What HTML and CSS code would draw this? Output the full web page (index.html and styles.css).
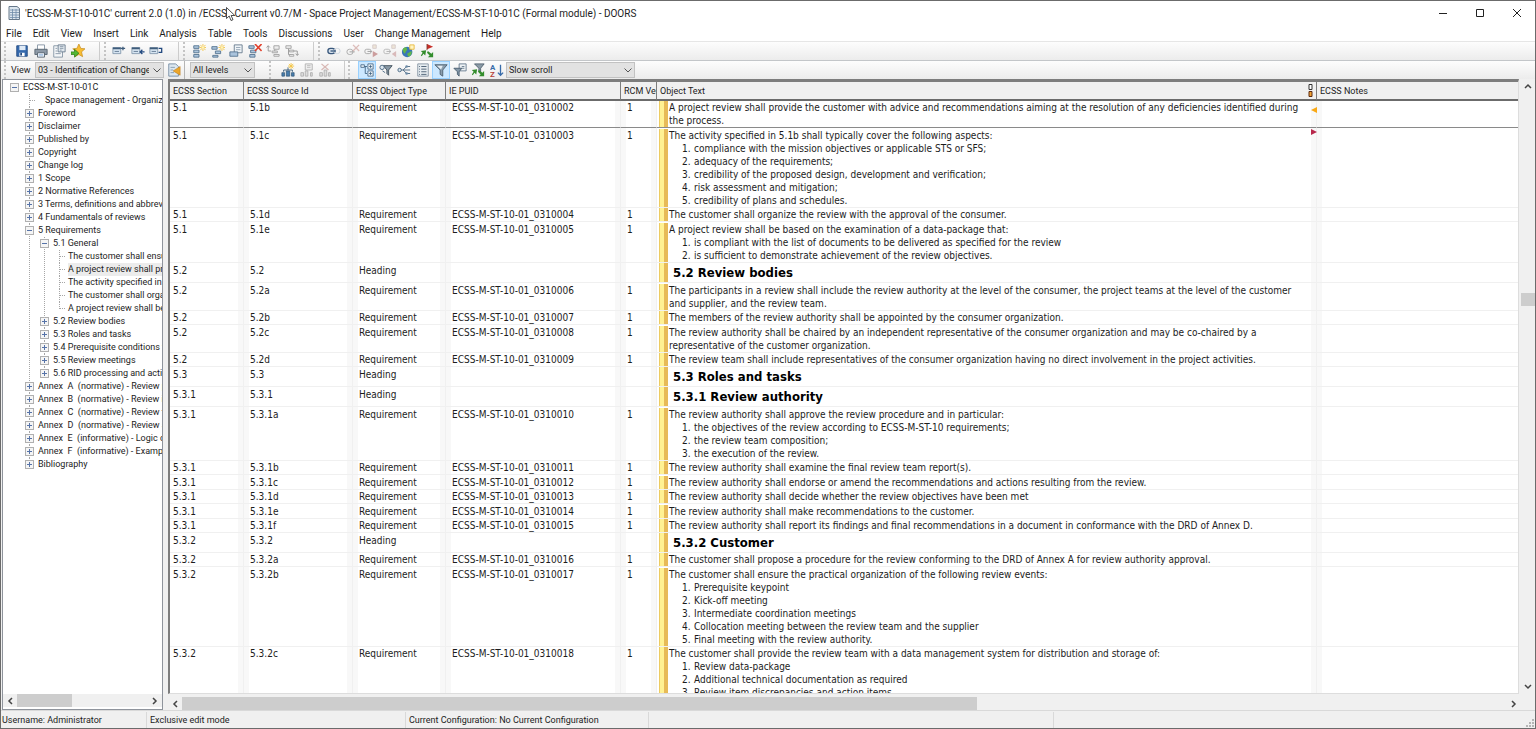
FILE: index.html
```
<!DOCTYPE html>
<html lang="en">
<head>
    <meta charset="UTF-8">
    <meta name="viewport" content="width=device-width, initial-scale=1.0">
    <title>ECSS-M-ST-10-01C (Formal module) - DOORS</title>
    <link rel="stylesheet" href="styles.css">
</head>
<body>
    <div class="window">
        <header class="titlebar">
            <svg class="app-icon" viewBox="0 0 12 14"><path d="M1 .5h8l2.500 2V13.500H1z" fill="#dce6ee" stroke="#66788a"/><path d="M2 4h9M2 6.500h9M2 9h9M2 11.500h9M4.500 3v10M8 3v10" stroke="#6f8ca8" stroke-width=".8"/></svg>
            <h1 class="title">'ECSS-M-ST-10-01C' current 2.0 (1.0) in /ECSS - Current v0.7/M - Space Project Management/ECSS-M-ST-10-01C (Formal module) - DOORS</h1>
            <div class="window-buttons">
                <button type="button" aria-label="Minimize"><svg viewBox="0 0 10 10"><path d="M1 5.500h8"/></svg></button>
                <button type="button" aria-label="Maximize"><svg viewBox="0 0 10 10"><path d="M1.500 1.500h7v7h-7z"/></svg></button>
                <button type="button" aria-label="Close"><svg viewBox="0 0 10 10"><path d="M1 1l8 8M9 1L1 9"/></svg></button>
            </div>
            <svg class="cursor" viewBox="0 0 10 15"><path d="M.5.500v11l2.700-2.500 1.800 4.500 2-.8-1.900-4.200h3.700z" fill="#fff" stroke="#222" stroke-width=".8"/></svg>
        </header>

        <nav class="menubar">
            <button type="button">File</button>
            <button type="button">Edit</button>
            <button type="button">View</button>
            <button type="button">Insert</button>
            <button type="button">Link</button>
            <button type="button">Analysis</button>
            <button type="button">Table</button>
            <button type="button">Tools</button>
            <button type="button">Discussions</button>
            <button type="button">User</button>
            <button type="button">Change Management</button>
            <button type="button">Help</button>
        </nav>

        <div class="toolbar">
            <div class="group group-file">
                <button type="button" aria-label="Save"><svg viewBox="0 0 16 16"><path d="M2 2h12v12H2z" fill="#3569ad" stroke="#234a80"/><path d="M5 2h7v5H5z" fill="#dfeaf6"/><path d="M5 10h6v4H5z" fill="#fff"/><path d="M6 10h2v3H6z" fill="#234a80"/></svg></button>
                <button type="button" aria-label="Print"><svg viewBox="0 0 16 16"><path d="M4 1h8v6H4z" fill="#fff" stroke="#8090a0"/><path d="M1 6h14v6H1z" fill="#8d99a6" stroke="#55616e"/><path d="M4 10h8v5H4z" fill="#eef4fb" stroke="#55616e"/><path d="M5.500 12.500h5" stroke="#6d9bd0"/></svg></button>
                <button type="button" aria-label="Properties"><svg viewBox="0 0 16 16"><path d="M2 2h10v13H2z" fill="#f4f6f8" stroke="#8292a2"/><path d="M7 1h8v8H7z" fill="#e1e8ee" stroke="#687a8d"/><path d="M9 3h4M9 5h4M9 7h2M4 5h2M4 8h2M4 11h6" stroke="#8595a5"/></svg></button>
                <button type="button" aria-label="Add favorite"><svg viewBox="0 0 16 16"><path d="M9 0l2.200 5 4.800.5-4 3.500 1.300 5.500L9 12l-4.500 2.500L5.700 9 2 5.500 6.800 5z" fill="#f8bd32" stroke="#c58b1c" stroke-width=".8"/><path d="M0 9h4V6l5 4.500L4 15v-3H0z" fill="#54b834" stroke="#287817" stroke-width=".8"/></svg></button>
            </div>
            <div class="group group-object">
                <button type="button" aria-label="Insert before"><svg viewBox="0 0 16 16"><path d="M1 4h9v7H1z" fill="#d6e4f1" stroke="#8297ab"/><path d="M1 5h9" stroke="#3e5c7b" stroke-width="2"/><path d="M3 8.500h5" stroke="#5f7890"/><path d="M10 5h5M12.500 3v4" stroke="#3e5c7b" stroke-width="1.500"/></svg></button>
                <button type="button" aria-label="Insert after"><svg viewBox="0 0 16 16"><path d="M1 4h9v7H1z" fill="#d6e4f1" stroke="#8297ab"/><path d="M1 5h9" stroke="#3e5c7b" stroke-width="2"/><path d="M3 8.500h5" stroke="#5f7890"/><path d="M10 9h5.500M13 6.500L10.500 9l2.500 2.500" fill="none" stroke="#234a80" stroke-width="1.500"/></svg></button>
                <button type="button" aria-label="Insert below"><svg viewBox="0 0 16 16"><path d="M1 4h9v7H1z" fill="#d6e4f1" stroke="#8297ab"/><path d="M1 5h9" stroke="#3e5c7b" stroke-width="2"/><path d="M3 8.500h5" stroke="#5f7890"/><path d="M11 5h3.500v4.500H11" fill="none" stroke="#234a80" stroke-width="1.500"/></svg></button>
            </div>
            <div class="group group-edit">
                <button type="button" aria-label="New object"><svg viewBox="0 0 16 16"><path d="M2 2h6v3H2zM2 7h6v3H2zM2 12h6v3H2z" fill="#acc5dd" stroke="#54728f"/><path d="M12.500 0v8M8.500 4h8M9.500 1l6 6M15.500 1l-6 6" stroke="#f4c544"/><circle cx="12.500" cy="4" r="1.500" fill="#fff3b8"/></svg></button>
                <button type="button" aria-label="New object below"><svg viewBox="0 0 16 16"><path d="M1 3h6v3H1zM5 8h6v3H5zM2 13h6v2H2z" fill="#acc5dd" stroke="#54728f"/><path d="M12.500 0v8M8.500 4h8M9.500 1l6 6M15.500 1l-6 6" stroke="#f4c544"/><circle cx="12.500" cy="4" r="1.500" fill="#fff3b8"/></svg></button>
                <button type="button" aria-label="Edit object"><svg viewBox="0 0 16 16"><path d="M6 1h9v9H6z" fill="#eef3f7" stroke="#65788c"/><path d="M8 4h5M8 6.500h5" stroke="#8fa0b1"/><path d="M1 9h9v5H1z" fill="#aac3dc" stroke="#54728f"/></svg></button>
                <button type="button" aria-label="Delete object"><svg viewBox="0 0 16 16"><path d="M1 2h6v3H1zM3 7h6v3H3zM2 12h6v3H2z" fill="#acc5dd" stroke="#54728f"/><path d="M8 0l7.500 8M15.500 0L8 8" stroke="#e0402c" stroke-width="1.800"/></svg></button>
                <button type="button" aria-label="Promote" disabled><svg viewBox="0 0 16 16"><path d="M2.500 2v6H6M.5 4l2-2 2 2M10 6v2" fill="none" stroke="#929292"/><path d="M9 2h6v4H9zM7 8h6v2H7zM9 12h6v2H9z" fill="#eee" stroke="#a0a0a0"/></svg></button>
                <button type="button" aria-label="Demote" disabled><svg viewBox="0 0 16 16"><path d="M4 5v7h3M8 8h6v5M12 11l2 2 2-2" fill="none" stroke="#929292"/><path d="M1 2h6v3H1zM5 7h5v2H5zM5 12h5v2H5z" fill="#eee" stroke="#a0a0a0"/></svg></button>
            </div>
            <div class="group group-link">
                <button type="button" aria-label="Link"><svg viewBox="0 0 16 16"><rect x="1" y="5" width="8" height="6" rx="3" fill="#d7e1ec" stroke="#38577c" stroke-width="1.500"/><rect x="8" y="5" width="7" height="6" rx="3" fill="none" stroke="#c9d2dc"/><path d="M4 8h6" stroke="#38577c" stroke-width="1.500"/></svg></button>
                <button type="button" aria-label="Delete link" disabled><svg viewBox="0 0 16 16"><rect x="1" y="6" width="7" height="6" rx="3" fill="none" stroke="#a5a5a5"/><path d="M4 9h6" stroke="#999"/><path d="M8 1l7 7M15 1L8 8" stroke="#dcbcb9" stroke-width="1.500"/></svg></button>
                <button type="button" aria-label="Start link" disabled><svg viewBox="0 0 16 16"><rect x="1" y="6" width="7" height="5" rx="2" fill="none" stroke="#a5a5a5"/><path d="M4 8.500h5" stroke="#999"/><path d="M10 1h4v4h-4z" fill="#eee5d6" stroke="#d6caca"/><path d="M10 8l6 3.500-6 3.500z" fill="#cc9d9d"/></svg></button>
                <button type="button" aria-label="Complete link" disabled><svg viewBox="0 0 16 16"><rect x="1" y="6" width="7" height="5" rx="2" fill="none" stroke="#b5b5b5"/><path d="M4 8.500h5" stroke="#aaa"/><path d="M10 1h4v4h-4z" fill="#eee5d6" stroke="#d6caca"/><path d="M15 8l-5 3.500 5 3.500z" fill="#d9baba"/></svg></button>
                <button type="button" aria-label="External link"><svg viewBox="0 0 16 16"><circle cx="7" cy="9" r="6" fill="#3976b8"/><path d="M2 6c3-4 5-2 5 0s-2 2-2 4-3 0-3-4zM7 11l5-3c1 4-2 7-4 6z" fill="#63b848"/><path d="M10 1h5v5h-5z" fill="#fff5c4" stroke="#e9b739"/></svg></button>
                <button type="button" aria-label="Refresh links"><svg viewBox="0 0 16 16"><path d="M8 0l7 3-7 3z" fill="#c72e28"/><path d="M8 0v7" stroke="#813b31"/><path d="M1 8l6-1-1 6-2-2-2 3-1-1 2-3zM15 15H9l2-2-3-3 1-2 4 3 2-2z" fill="#338d2d"/></svg></button>
            </div>
        </div>

        <div class="toolbar toolbar-view">
            <label class="view-label" for="view">View</label>
            <span class="combo combo-view"><select id="view"><option>03 - Identification of Changes</option></select><svg viewBox="0 0 8 5"><path d="M.5.500L4 4 7.500.500"/></svg></span>
            <button type="button" class="load-view" aria-label="Load view"><svg viewBox="0 0 16 16"><path d="M2 1h8l3 3v11H2z" fill="#dce7ef" stroke="#728aa2"/><path d="M4 5h5M4 8h3M4 11h4" stroke="#8199af"/><path d="M15 4v10L7 9z" fill="#eca629" stroke="#b7761b" stroke-width=".6"/></svg></button>
            <span class="combo combo-level"><select aria-label="Levels"><option>All levels</option></select><svg viewBox="0 0 8 5"><path d="M.5.500L4 4 7.500.500"/></svg></span>
            <div class="group group-column">
                <button type="button" aria-label="Insert column"><svg viewBox="0 0 16 16"><path d="M3 10V8h10v2M8 8V5" fill="none" stroke="#315675"/><path d="M1 11h3v4H1zM6 9h4v6H6zM12 11h3v4h-3z" fill="#477cad" stroke="#315675" stroke-width=".8"/><path d="M11.500 0v7M8 3.500h7M9 1l5 5M14 1L9 6" stroke="#f4c544"/></svg></button>
                <button type="button" aria-label="Edit column" disabled><svg viewBox="0 0 16 16"><path d="M1 11h3v4H1zM6 9h3v6H6zM12 11h2v4h-2z" fill="#ddd" stroke="#b0b0b0"/><path d="M6 1h8v7H6z" fill="#eee" stroke="#b0b0b0"/><path d="M8 3h4M8 5h4" stroke="#bbb"/></svg></button>
                <button type="button" aria-label="Remove column" disabled><svg viewBox="0 0 16 16"><path d="M2 11h3v4H2zM7 8h3v7H7zM12 11h2v4h-2z" fill="#ddd" stroke="#b0b0b0"/><path d="M4 1l8 7M12 1L4 8" stroke="#d8b8b4" stroke-width="1.500"/></svg></button>
            </div>
            <div class="group group-filter">
                <button type="button" class="active" aria-label="Module explorer"><svg viewBox="0 0 16 16"><path d="M1 2h4v3H1zM9 1h6v6H9zM9 9h6v6H9z" fill="#e6eef4" stroke="#4f6e8c"/><path d="M5 4h3M6 4v8h2M10.500 4h3M12 2.500v3M10.500 12h3M12 10.500v3" fill="none" stroke="#3f6280"/></svg></button>
                <button type="button" aria-label="Filter links"><svg viewBox="0 0 16 16"><path d="M5 3h10l-4 5v6l-2-2V8z" fill="#8798a6" stroke="#40505d"/><circle cx="3.500" cy="5" r="2.500" fill="#dce7ef" stroke="#45647f"/><path d="M4 9l3 2" stroke="#45647f"/></svg></button>
                <button type="button" aria-label="Graphics"><svg viewBox="0 0 16 16"><path d="M4 8h3l4-4h4M7 8h8M7 8l4 4h4" fill="none" stroke="#45647f"/><circle cx="3" cy="8" r="2" fill="#d8e4ed" stroke="#45647f"/><circle cx="11" cy="4" r="1.500" fill="#6c8aa6"/><circle cx="11" cy="12" r="1.500" fill="#6c8aa6"/></svg></button>
                <button type="button" aria-label="Outline"><svg viewBox="0 0 16 16"><path d="M2 1h12v14H2z" fill="#e7edf1" stroke="#8291a0"/><path d="M6 4h6M6 7h6M6 10h6M6 13h6" stroke="#40556a"/><path d="M3.500 4h1M3.500 7h1M3.500 10h1M3.500 13h1" stroke="#40556a"/></svg></button>
                <button type="button" class="active" aria-label="Filter"><svg viewBox="0 0 16 16"><path d="M1 2h14L10 8v7l-3-2V8z" fill="#8a9dad" stroke="#4a5b6b"/><path d="M3.500 3H10L8 7.500z" fill="#e5edf3"/></svg></button>
                <button type="button" aria-label="Edit filter"><svg viewBox="0 0 16 16"><path d="M7 1h8v8H7z" fill="#eef2f5" stroke="#64778b"/><path d="M10 4h3M10 6h3" stroke="#64778b"/><path d="M1 6h9L7 10v5l-2-2v-3z" fill="#8598a9" stroke="#465a6d"/></svg></button>
                <button type="button" aria-label="Refresh filter"><svg viewBox="0 0 16 16"><path d="M4 1h11l-4 5v5l-2-1V6z" fill="#8b9ba7" stroke="#4f606e"/><path d="M1 8l6-1-1 6-2-2-2 3-1-1 2-3zM15 15H9l2-2-3-3 1-2 4 3 2-2z" fill="#338d2d"/></svg></button>
                <button type="button" aria-label="Sort"><svg viewBox="0 0 16 16"><text x="0" y="8" class="sort-a">A</text><text x="0" y="16" class="sort-z">Z</text><path d="M12 2v12M9 11l3 3 3-3" fill="none" stroke="#386ba9" stroke-width="1.500"/></svg></button>
            </div>
            <span class="combo combo-scroll"><select aria-label="Scroll speed"><option>Slow scroll</option></select><svg viewBox="0 0 8 5"><path d="M.5.500L4 4 7.500.500"/></svg></span>
        </div>

        <main class="workspace">
            <aside class="explorer">
                <ul class="tree">
                    <li><div class="node"><button type="button" class="toggle open" aria-label="Collapse"></button><span>ECSS-M-ST-10-01C</span></div>
                        <ul>
                            <li><div class="node leaf intro"><span>Space management - Organization</span></div></li>
                            <li><div class="node"><button type="button" class="toggle" aria-label="Expand"></button><span>Foreword</span></div></li>
                            <li><div class="node"><button type="button" class="toggle" aria-label="Expand"></button><span>Disclaimer</span></div></li>
                            <li><div class="node"><button type="button" class="toggle" aria-label="Expand"></button><span>Published by</span></div></li>
                            <li><div class="node"><button type="button" class="toggle" aria-label="Expand"></button><span>Copyright</span></div></li>
                            <li><div class="node"><button type="button" class="toggle" aria-label="Expand"></button><span>Change log</span></div></li>
                            <li><div class="node"><button type="button" class="toggle" aria-label="Expand"></button><span>1 Scope</span></div></li>
                            <li><div class="node"><button type="button" class="toggle" aria-label="Expand"></button><span>2 Normative References</span></div></li>
                            <li><div class="node"><button type="button" class="toggle" aria-label="Expand"></button><span>3 Terms, definitions and abbreviated</span></div></li>
                            <li><div class="node"><button type="button" class="toggle" aria-label="Expand"></button><span>4 Fundamentals of reviews</span></div></li>
                            <li><div class="node"><button type="button" class="toggle open" aria-label="Collapse"></button><span>5 Requirements</span></div>
                                <ul>
                                    <li><div class="node"><button type="button" class="toggle open" aria-label="Collapse"></button><span>5.1 General</span></div>
                                        <ul>
                                            <li><div class="node leaf"><span>The customer shall ensure</span></div></li>
                                            <li><div class="node leaf selected"><span>A project review shall provide</span></div></li>
                                            <li><div class="node leaf"><span>The activity specified in 5.1b</span></div></li>
                                            <li><div class="node leaf"><span>The customer shall organize</span></div></li>
                                            <li><div class="node leaf"><span>A project review shall be based</span></div></li>
                                        </ul>
                                    </li>
                                    <li><div class="node"><button type="button" class="toggle" aria-label="Expand"></button><span>5.2 Review bodies</span></div></li>
                                    <li><div class="node"><button type="button" class="toggle" aria-label="Expand"></button><span>5.3 Roles and tasks</span></div></li>
                                    <li><div class="node"><button type="button" class="toggle" aria-label="Expand"></button><span>5.4 Prerequisite conditions for</span></div></li>
                                    <li><div class="node"><button type="button" class="toggle" aria-label="Expand"></button><span>5.5 Review meetings</span></div></li>
                                    <li><div class="node"><button type="button" class="toggle" aria-label="Expand"></button><span>5.6 RID processing and actions</span></div></li>
                                </ul>
                            </li>
                            <li><div class="node"><button type="button" class="toggle" aria-label="Expand"></button><span>Annex&nbsp; A&nbsp; (normative) - Review plan</span></div></li>
                            <li><div class="node"><button type="button" class="toggle" aria-label="Expand"></button><span>Annex&nbsp; B&nbsp; (normative) - Review item</span></div></li>
                            <li><div class="node"><button type="button" class="toggle" aria-label="Expand"></button><span>Annex&nbsp; C&nbsp; (normative) - Review team</span></div></li>
                            <li><div class="node"><button type="button" class="toggle" aria-label="Expand"></button><span>Annex&nbsp; D&nbsp; (normative) - Review authority</span></div></li>
                            <li><div class="node"><button type="button" class="toggle" aria-label="Expand"></button><span>Annex&nbsp; E&nbsp; (informative) - Logic diagram</span></div></li>
                            <li><div class="node"><button type="button" class="toggle" aria-label="Expand"></button><span>Annex&nbsp; F&nbsp; (informative) - Examples</span></div></li>
                            <li><div class="node"><button type="button" class="toggle" aria-label="Expand"></button><span>Bibliography</span></div></li>
                        </ul>
                    </li>
                </ul>
                <div class="hscroll">
                    <button type="button" aria-label="Scroll left"><svg viewBox="0 0 6 8"><path d="M5 1L2 4l3 3"/></svg></button>
                    <div class="track"><div class="thumb thumb-tree"></div></div>
                    <button type="button" aria-label="Scroll right"><svg viewBox="0 0 6 8"><path d="M1 1l3 3-3 3"/></svg></button>
                </div>
            </aside>

            <section class="module">
                <div class="module-body">
                    <div class="grid">
                        <table>
                            <colgroup>
                                <col class="col-section"><col class="col-source"><col class="col-type"><col class="col-puid"><col class="col-rcm"><col><col class="col-notes">
                            </colgroup>
                            <thead>
                                <tr>
                                    <th>ECSS Section</th><th>ECSS Source Id</th><th>ECSS Object Type</th><th>IE PUID</th><th>RCM Version</th>
                                    <th><div class="text-head"><span>Object Text</span><svg viewBox="0 0 5 13"><path d="M1 .5h3v5H1z" fill="#fff" stroke="#333"/><path d="M1 7.500h3v5H1z" fill="#f0a030" stroke="#5c2a10"/></svg></div></th>
                                    <th>ECSS Notes</th>
                                </tr>
                            </thead>
                            <tbody>
                                <tr class="current"><td>5.1</td><td>5.1b</td><td>Requirement</td><td>ECSS-M-ST-10-01_0310002</td><td>1</td><td class="text"><div class="body link-out">A project review shall provide the customer with advice and recommendations aiming at the resolution of any deficiencies identified during the process.<svg viewBox="0 0 6 6"><path d="M6 0v6L0 3z" fill="#f9a814"/></svg></div></td><td></td></tr>
                                <tr><td>5.1</td><td>5.1c</td><td>Requirement</td><td>ECSS-M-ST-10-01_0310003</td><td>1</td><td class="text"><div class="body link-in">The activity specified in 5.1b shall typically cover the following aspects:<ol><li>compliance with the mission objectives or applicable STS or SFS;</li><li>adequacy of the requirements;</li><li>credibility of the proposed design, development and verification;</li><li>risk assessment and mitigation;</li><li>credibility of plans and schedules.</li></ol><svg viewBox="0 0 6 6"><path d="M0 0v6l6-3z" fill="#b8284c"/></svg></div></td><td></td></tr>
                                <tr><td>5.1</td><td>5.1d</td><td>Requirement</td><td>ECSS-M-ST-10-01_0310004</td><td>1</td><td class="text"><div class="body">The customer shall organize the review with the approval of the consumer.</div></td><td></td></tr>
                                <tr><td>5.1</td><td>5.1e</td><td>Requirement</td><td>ECSS-M-ST-10-01_0310005</td><td>1</td><td class="text"><div class="body">A project review shall be based on the examination of a data-package that:<ol><li>is compliant with the list of documents to be delivered as specified for the review</li><li>is sufficient to demonstrate achievement of the review objectives.</li></ol></div></td><td></td></tr>
                                <tr class="heading"><td>5.2</td><td>5.2</td><td>Heading</td><td></td><td></td><td class="text"><h2>5.2 Review bodies</h2></td><td></td></tr>
                                <tr><td>5.2</td><td>5.2a</td><td>Requirement</td><td>ECSS-M-ST-10-01_0310006</td><td>1</td><td class="text"><div class="body">The participants in a review shall include the review authority at the level of the consumer, the project teams at the level of the customer and supplier, and the review team.</div></td><td></td></tr>
                                <tr><td>5.2</td><td>5.2b</td><td>Requirement</td><td>ECSS-M-ST-10-01_0310007</td><td>1</td><td class="text"><div class="body">The members of the review authority shall be appointed by the consumer organization.</div></td><td></td></tr>
                                <tr><td>5.2</td><td>5.2c</td><td>Requirement</td><td>ECSS-M-ST-10-01_0310008</td><td>1</td><td class="text"><div class="body">The review authority shall be chaired by an independent representative of the consumer organization and may be co-chaired by a representative of the customer organization.</div></td><td></td></tr>
                                <tr><td>5.2</td><td>5.2d</td><td>Requirement</td><td>ECSS-M-ST-10-01_0310009</td><td>1</td><td class="text"><div class="body">The review team shall include representatives of the consumer organization having no direct involvement in the project activities.</div></td><td></td></tr>
                                <tr class="heading"><td>5.3</td><td>5.3</td><td>Heading</td><td></td><td></td><td class="text"><h2>5.3 Roles and tasks</h2></td><td></td></tr>
                                <tr class="heading"><td>5.3.1</td><td>5.3.1</td><td>Heading</td><td></td><td></td><td class="text"><h2>5.3.1 Review authority</h2></td><td></td></tr>
                                <tr><td>5.3.1</td><td>5.3.1a</td><td>Requirement</td><td>ECSS-M-ST-10-01_0310010</td><td>1</td><td class="text"><div class="body">The review authority shall approve the review procedure and in particular:<ol><li>the objectives of the review according to ECSS-M-ST-10 requirements;</li><li>the review team composition;</li><li>the execution of the review.</li></ol></div></td><td></td></tr>
                                <tr><td>5.3.1</td><td>5.3.1b</td><td>Requirement</td><td>ECSS-M-ST-10-01_0310011</td><td>1</td><td class="text"><div class="body">The review authority shall examine the final review team report(s).</div></td><td></td></tr>
                                <tr><td>5.3.1</td><td>5.3.1c</td><td>Requirement</td><td>ECSS-M-ST-10-01_0310012</td><td>1</td><td class="text"><div class="body">The review authority shall endorse or amend the recommendations and actions resulting from the review.</div></td><td></td></tr>
                                <tr><td>5.3.1</td><td>5.3.1d</td><td>Requirement</td><td>ECSS-M-ST-10-01_0310013</td><td>1</td><td class="text"><div class="body">The review authority shall decide whether the review objectives have been met</div></td><td></td></tr>
                                <tr><td>5.3.1</td><td>5.3.1e</td><td>Requirement</td><td>ECSS-M-ST-10-01_0310014</td><td>1</td><td class="text"><div class="body">The review authority shall make recommendations to the customer.</div></td><td></td></tr>
                                <tr><td>5.3.1</td><td>5.3.1f</td><td>Requirement</td><td>ECSS-M-ST-10-01_0310015</td><td>1</td><td class="text"><div class="body">The review authority shall report its findings and final recommendations in a document in conformance with the DRD of Annex D.</div></td><td></td></tr>
                                <tr class="heading"><td>5.3.2</td><td>5.3.2</td><td>Heading</td><td></td><td></td><td class="text"><h2>5.3.2 Customer</h2></td><td></td></tr>
                                <tr><td>5.3.2</td><td>5.3.2a</td><td>Requirement</td><td>ECSS-M-ST-10-01_0310016</td><td>1</td><td class="text"><div class="body">The customer shall propose a procedure for the review conforming to the DRD of Annex A for review authority approval.</div></td><td></td></tr>
                                <tr><td>5.3.2</td><td>5.3.2b</td><td>Requirement</td><td>ECSS-M-ST-10-01_0310017</td><td>1</td><td class="text"><div class="body">The customer shall ensure the practical organization of the following review events:<ol><li>Prerequisite keypoint</li><li>Kick-off meeting</li><li>Intermediate coordination meetings</li><li>Collocation meeting between the review team and the supplier</li><li>Final meeting with the review authority.</li></ol></div></td><td></td></tr>
                                <tr><td>5.3.2</td><td>5.3.2c</td><td>Requirement</td><td>ECSS-M-ST-10-01_0310018</td><td>1</td><td class="text"><div class="body">The customer shall provide the review team with a data management system for distribution and storage of:<ol><li>Review data-package</li><li>Additional technical documentation as required</li><li>Review item discrepancies and action items</li></ol></div></td><td></td></tr>
                            </tbody>
                        </table>
                    </div>
                    <div class="vscroll">
                        <button type="button" aria-label="Scroll up"><svg viewBox="0 0 8 6"><path d="M1 5l3-3 3 3"/></svg></button>
                        <div class="track"><div class="thumb"></div></div>
                        <button type="button" aria-label="Scroll down"><svg viewBox="0 0 8 6"><path d="M1 1l3 3 3-3"/></svg></button>
                    </div>
                </div>
                <div class="hscroll">
                    <button type="button" aria-label="Scroll left"><svg viewBox="0 0 6 8"><path d="M5 1L2 4l3 3"/></svg></button>
                    <div class="track"><div class="thumb thumb-grid"></div></div>
                    <button type="button" aria-label="Scroll right"><svg viewBox="0 0 6 8"><path d="M1 1l3 3-3 3"/></svg></button>
                </div>
            </section>
        </main>

        <footer class="statusbar">
            <span class="status-user">Username: Administrator</span>
            <span class="status-mode">Exclusive edit mode</span>
            <span class="status-config">Current Configuration: No Current Configuration</span>
            <span class="status-blank"></span>
            <span class="status-rest"></span>
            <svg viewBox="0 0 8 8"><path d="M6 0h2v2H6zM3 3h2v2H3zM6 3h2v2H6zM0 6h2v2H0zM3 6h2v2H3zM6 6h2v2H6z" fill="#b5b5b5"/></svg>
        </footer>
    </div>
</body>
</html>
```
FILE: styles.css
```
* {
    margin: 0;
    padding: 0;
    box-sizing: border-box;
}

html, body {
    height: 100%;
    overflow: hidden;
}

body {
    font-family: Roboto, "Liberation Sans", Arial, sans-serif;
    font-size: 9px;
    color: #1c1c1c;
    background-color: #f0f0f0;
}

button, select {
    font: inherit;
    color: inherit;
    border: none;
    background: none;
}

ul, ol {
    list-style: none;
}

svg {
    display: block;
}

.window {
    height: 100vh;
    display: flex;
    flex-direction: column;
    border: 1px solid #6b6b6b;
}

/* title and menu */
.titlebar {
    position: relative;
    display: flex;
    align-items: center;
    flex: none;
    height: 24px;
    padding-left: 7px;
    background-color: #fff;
}

.app-icon {
    width: 12px;
    height: 14px;
    margin-right: 5px;
}

.title {
    flex: 1;
    font-size: 10px;
    font-weight: 400;
    white-space: nowrap;
}

.window-buttons {
    display: flex;
}

.window-buttons button {
    width: 37px;
    height: 22px;
    display: flex;
    align-items: center;
    justify-content: center;
}

.window-buttons svg {
    width: 10px;
    height: 10px;
    fill: none;
    stroke: #222;
}

.cursor {
    position: absolute;
    left: 225px;
    top: 6px;
    width: 10px;
    height: 15px;
}

.menubar {
    display: flex;
    flex: none;
    height: 16px;
    padding-left: 5px;
    gap: 11px;
    background-color: #fff;
    font-size: 10px;
}

/* toolbars */
.toolbar {
    display: flex;
    align-items: center;
    flex: none;
    height: 19px;
    border-top: 1px solid #e6e6e6;
    background: linear-gradient(#fdfdfd, #ececec);
}

.toolbar-view {
    border-top-color: #c3c6c9;
}

.group {
    display: flex;
    height: 18px;
    border-left: 2px dotted #c4c4c4;
}

.group button, .load-view {
    display: flex;
    align-items: center;
    justify-content: center;
    width: 18px;
    height: 18px;
}

.group button:nth-child(even) {
    width: 19px;
}

.group svg, .load-view svg {
    flex: none;
    width: 14px;
    height: 14px;
}

.group button.active {
    background-color: #cce8ff;
    border: 1px solid #99d1ff;
}

.group-file {
    margin-left: 3px;
    padding-left: 7px;
    width: 96px;
    border-right: 1px solid #ccc;
}

.group-object {
    margin-left: 4px;
    padding-left: 4px;
    width: 75px;
    border-right: 1px solid #ccc;
}

.group-edit {
    margin-left: 4px;
    padding-left: 5px;
    width: 131px;
    border-right: 1px solid #ccc;
}

.group-link {
    margin-left: 4px;
    padding-left: 5px;
}

.sort-a, .sort-z {
    font-size: 9px;
    font-weight: 700;
    fill: #386ba9;
}

.sort-z {
    fill: #b5423b;
}

.view-label {
    width: 31px;
    height: 18px;
    margin-left: 3px;
    padding-left: 5px;
    line-height: 18px;
    border-left: 2px dotted #c4c4c4;
}

.combo {
    position: relative;
    height: 16px;
}

.combo select {
    appearance: none;
    width: 100%;
    height: 16px;
    padding: 0 14px 0 2px;
    background-color: #e2e2e2;
    border: 1px solid #c2c2c2;
}

.combo svg {
    position: absolute;
    right: 3px;
    top: 6px;
    width: 8px;
    height: 5px;
    fill: none;
    stroke: #555;
    pointer-events: none;
}

.combo-view {
    width: 129px;
}

.load-view {
    width: 21px;
    margin-right: 5px;
    border-right: 1px solid #b5b5b5;
}

.combo-level {
    width: 65px;
}

.group-column {
    margin-left: 14px;
    padding-left: 8px;
    width: 76px;
    border-right: 1px solid #ccc;
}

.group-filter {
    margin-left: 3px;
    padding-left: 8px;
}

.combo-scroll {
    width: 129px;
}

/* module explorer */
.workspace {
    display: flex;
    flex: 1;
    gap: 5px;
    min-height: 0;
    padding-left: 1px;
}

.explorer {
    display: flex;
    flex-direction: column;
    flex: none;
    width: 161px;
    border: 1px solid #8f949c;
    background-color: #fff;
}

.tree {
    flex: 1;
    overflow: hidden;
    padding-top: 1px;
    padding-left: 7px;
}

.tree ul {
    padding-left: 15px;
}

.tree ul > li {
    background: repeating-linear-gradient(#a6a6a6 0 1px, transparent 1px 2px) 4px 0 / 1px 100% no-repeat;
}

.tree ul > li:last-child {
    background-size: 1px 7px;
}

.node {
    display: flex;
    align-items: center;
    height: 13px;
    line-height: 13px;
    white-space: nowrap;
}

.toggle {
    flex: none;
    width: 9px;
    height: 9px;
    margin-right: 4px;
    border: 1px solid #b0b0b0;
    background:
        linear-gradient(#5673a8, #5673a8) center / 5px 1px no-repeat,
        linear-gradient(#5673a8, #5673a8) center / 1px 5px no-repeat,
        #f5f5f5;
}

.toggle.open {
    background: linear-gradient(#5673a8, #5673a8) center / 5px 1px no-repeat, #f5f5f5;
}

.leaf::before {
    content: "";
    flex: none;
    width: 6px;
    margin: 0 3px 0 4px;
    border-top: 1px dotted #a6a6a6;
}

.intro::before {
    margin-right: 10px;
}

.selected span {
    background-color: #ececec;
}

/* scroll bars */
.hscroll {
    display: flex;
    flex: none;
    height: 13px;
    background-color: #f0f0f0;
}

.hscroll button {
    display: flex;
    align-items: center;
    justify-content: center;
    width: 14px;
}

.hscroll svg {
    width: 6px;
    height: 8px;
}

.hscroll svg, .vscroll svg {
    fill: none;
    stroke: #444;
    stroke-width: 1.5;
}

.track {
    flex: 1;
}

.thumb {
    background-color: #cdcdcd;
}

.hscroll .thumb {
    height: 13px;
}

.thumb-tree {
    width: 42%;
}

.thumb-grid {
    width: 60%;
}

.vscroll {
    display: flex;
    flex-direction: column;
    flex: none;
    width: 14px;
    margin-left: 2px;
}

.vscroll button {
    display: flex;
    align-items: center;
    justify-content: center;
    height: 14px;
}

.vscroll svg {
    width: 8px;
    height: 6px;
}

.vscroll .track {
    display: flex;
    flex-direction: column;
}

/* a third of the way down the module */
.vscroll .track::before {
    content: "";
    height: 34%;
}

.vscroll .thumb {
    height: 13px;
}

.explorer .hscroll {
    margin-bottom: 2px;
}

/* module table */
.module {
    display: flex;
    flex-direction: column;
    flex: 1;
    min-width: 0;
}

.module .hscroll {
    margin-top: 3px;
    margin-right: 14px;
}

.module-body {
    display: flex;
    flex: 1;
    min-height: 0;
}

.grid {
    flex: 1;
    overflow: hidden;
    border-top: 3px solid #7d7d7d;
    border-left: 2px solid #7d7d7d;
    border-right: 1px solid #ddd;
    border-bottom: 1px solid #ddd;
    background-color: #fff;
}

table {
    width: 100%;
    table-layout: fixed;
    border-collapse: separate;
    border-spacing: 0;
}

.col-section {
    width: 74px;
}

.col-source {
    width: 109px;
}

.col-type {
    width: 93px;
}

.col-puid {
    width: 175px;
}

.col-rcm {
    width: 36px;
}

.col-notes {
    width: 201px;
}

th {
    height: 19px;
    padding-left: 3px;
    overflow: hidden;
    white-space: nowrap;
    text-align: left;
    font-weight: 400;
    background-color: #f0f0f0;
    border-right: 1px solid #7d7d7d;
    border-bottom: 2px solid #6b6b6b;
}

th:last-child {
    border-right: none;
}

.text-head {
    display: flex;
    justify-content: space-between;
    align-items: center;
}

.text-head svg {
    width: 5px;
    height: 13px;
    margin-right: 3px;
}

td {
    padding: 0 5px 0 6px;
    vertical-align: top;
    font-family: "DejaVu Sans Condensed", "DejaVu Sans", sans-serif;
    font-size: 10px;
    line-height: 13px;
    white-space: nowrap;
    border-right: 1px solid #f0f0f0;
    border-bottom: 1px solid #f0f0f0;
    background: linear-gradient(to right, #f8f8f8 5px, transparent 5px calc(100% - 5px), #f8f8f8 calc(100% - 5px));
}

td:first-child {
    padding-left: 3px;
    background: linear-gradient(to left, #f8f8f8 5px, transparent 5px);
}

td:last-child {
    border-right: none;
    background: linear-gradient(to right, #f8f8f8 5px, transparent 5px);
}

tbody tr:nth-child(even) td {
    padding-top: 1px;
}

.current td {
    border-bottom-color: #8a8a8a;
}

td.text {
    padding-left: 2px;
    white-space: normal;
    background: linear-gradient(to left, #f8f8f8 5px, transparent 5px);
}

.body, h2 {
    position: relative;
    padding-left: 10px;
    background: linear-gradient(to right, #eccb62 1px, #fff193 1px 5px, #e7ba58 5px 9px, transparent 9px);
}

.body svg {
    position: absolute;
    top: 6px;
    right: -6px;
    width: 6px;
    height: 6px;
}

.body.link-in svg {
    top: 0;
}

.body li {
    display: flex;
    padding-left: 13px;
    counter-increment: item;
}

.body ol {
    counter-reset: item;
}

.body li::before {
    content: counter(item) ".";
    width: 12px;
}

tbody .heading td {
    height: 20px;
    padding-top: 1px;
}

tbody .heading td.text {
    padding-top: 0;
}

h2 {
    padding-left: 14px;
    font-size: 13px;
    line-height: 19px;
    color: #000;
}

/* status bar */
.statusbar {
    display: flex;
    align-items: flex-end;
    flex: none;
    height: 18px;
    border-top: 1px solid #d9d9d9;
}

.statusbar span {
    height: 16px;
    line-height: 16px;
    padding-left: 3px;
    border-right: 1px solid #d9d9d9;
    white-space: nowrap;
}

.statusbar .status-user {
    width: 146px;
    padding-left: 1px;
}

.status-mode {
    width: 259px;
}

.status-config {
    width: 243px;
}

.status-blank {
    width: 405px;
}

.statusbar .status-rest {
    flex: 1;
    border-right: none;
}

.statusbar svg {
    width: 8px;
    height: 8px;
    margin: 0 1px 1px 0;
}
```
